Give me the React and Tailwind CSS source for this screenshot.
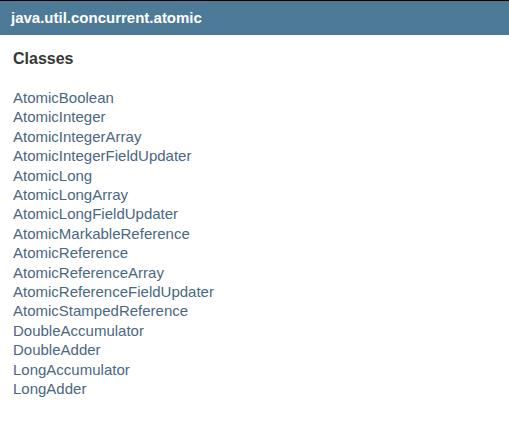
const classes = [
	"AtomicBoolean",
	"AtomicInteger",
	"AtomicIntegerArray",
	"AtomicIntegerFieldUpdater",
	"AtomicLong",
	"AtomicLongArray",
	"AtomicLongFieldUpdater",
	"AtomicMarkableReference",
	"AtomicReference",
	"AtomicReferenceArray",
	"AtomicReferenceFieldUpdater",
	"AtomicStampedReference",
	"DoubleAccumulator",
	"DoubleAdder",
	"LongAccumulator",
	"LongAdder",
];

const App = () => {
	return (
		<div className="w-[509px] h-[429px] bg-white border-t border-black" style={{ fontFamily: "'Liberation Sans', Arial, sans-serif" }}>
			<h1 className="bg-[#4d7a97] text-white font-bold text-[15px] h-[34px] flex items-center px-[11px]">
				java.util.concurrent.atomic
			</h1>
			<div className="px-[13px]">
				<h2 className="text-[#353833] font-bold text-[16px] leading-[18px] mt-[15px] mb-[20px]">Classes</h2>
				<ul className="flex flex-col">
					{classes.map((c) => (
						<li key={c} className="text-[15px] leading-[19.4px] text-[#4a6782]">
							<a href="#">{c}</a>
						</li>
					))}
				</ul>
			</div>
		</div>
	);
};

export default App;
